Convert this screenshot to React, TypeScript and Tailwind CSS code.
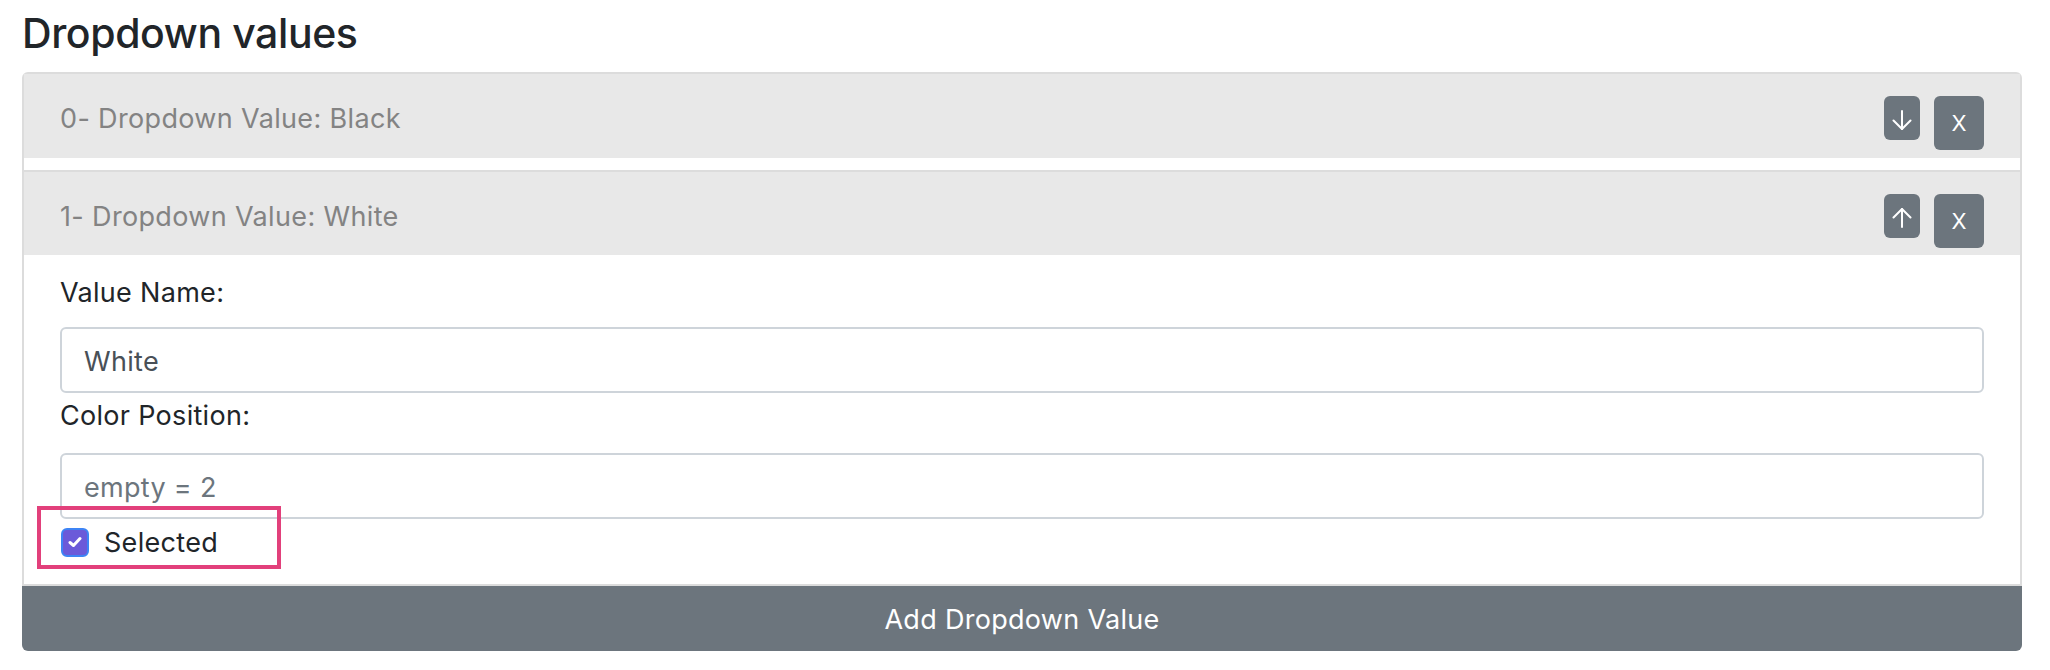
import type { ReactNode } from "react";

const font = { fontFamily: "Inter, 'Noto Sans', sans-serif" };

function ArrowIcon({ up }: { up?: boolean }) {
  return (
    <svg width="20" height="20" viewBox="0 0 20 20" fill="none" stroke="white" strokeWidth="2" strokeLinecap="round" strokeLinejoin="round" className={up ? "rotate-180" : ""}>
      <path d="M10 1v18" />
      <path d="M1.5 10.5 10 19l8.5-8.5" />
    </svg>
  );
}

function ValueHeader({ label, up, top }: { label: string; up?: boolean; top?: boolean }) {
  return (
    <div className={`flex items-start justify-between bg-[#e8e8e8] px-[36px] ${top ? "h-[84px] pt-[22px]" : "h-[85px] border-t-2 border-[#dcdcdc] pt-[22px]"}`}>
      <span className="pt-[3px] text-[27px] leading-[40px] tracking-[0.35px] text-[#838383]">{label}</span>
      <div className="flex items-start gap-[14px]">
        <button type="button" className="grid h-[44px] w-[36px] place-items-center rounded-[6px] bg-[#6c757d] pt-[3px]">
          <ArrowIcon up={up} />
        </button>
        <button type="button" className="grid h-[54px] w-[50px] place-items-center rounded-[6px] bg-[#6c757d] text-[22px] text-white">
          X
        </button>
      </div>
    </div>
  );
}

function Field({ label, children }: { label: string; children: ReactNode }) {
  return (
    <>
      <label className="block pt-[2px] text-[27px] leading-[40px] tracking-[0.3px] text-[#212529]">{label}</label>
      {children}
    </>
  );
}

export default function App() {
  return (
    <div className="min-h-screen bg-white pl-[22px] pr-[28px] pt-[9px]" style={font}>
      <h4 className="mb-[14px] text-[41px] font-medium leading-[49px] tracking-[-0.4px] text-[#212529]">Dropdown values</h4>

      <div className="rounded-t-[6px] border-2 border-[#dcdcdc]">
        <ValueHeader label="0- Dropdown Value: Black" top />
        <div className="h-[12px] bg-white" />
        <ValueHeader label="1- Dropdown Value: White" up />

        <div className="px-[36px] pb-[22px] pt-[16px]">
          <Field label="Value Name:">
            <div className="mt-[14px] flex h-[66px] items-center rounded-[6px] border-2 border-[#ced4da] px-[22px] pt-[5px] text-[27px] tracking-[0.3px] text-[#495057]">
              White
            </div>
          </Field>
          <div className="mt-[1px]" />
          <Field label="Color Position:">
            <div className="mt-[17px] flex h-[66px] items-center rounded-[6px] border-2 border-[#ced4da] px-[22px] pt-[4px] text-[27px] tracking-[0.3px] text-[#6c757d]">
              empty = 2
            </div>
          </Field>

          <div className="relative mt-[3px] flex h-[40px] items-center gap-[15px]">
            <span className="ml-[1px] grid h-[29px] w-[28px] place-items-center rounded-[6px] border-2 border-[#3d84f5] bg-[#6b5ad9]">
              <svg width="14" height="12" viewBox="0 0 14 12" fill="none" stroke="white" strokeWidth="3" strokeLinecap="round" strokeLinejoin="round">
                <path d="M2 6.5 5.5 9.5 12 2.5" />
              </svg>
            </span>
            <span className="pt-[2px] text-[27px] leading-[40px] tracking-[0.3px] text-[#212529]">Selected</span>
            <div className="pointer-events-none absolute left-[-23px] top-[-16px] h-[63px] w-[244px] border-4 border-[#e2407b]" />
          </div>
        </div>
      </div>

      <button type="button" className="block h-[65px] w-full rounded-b-[6px] bg-[#6c757d] pt-[3px] text-[27px] tracking-[0.3px] text-white">
        Add Dropdown Value
      </button>
    </div>
  );
}
